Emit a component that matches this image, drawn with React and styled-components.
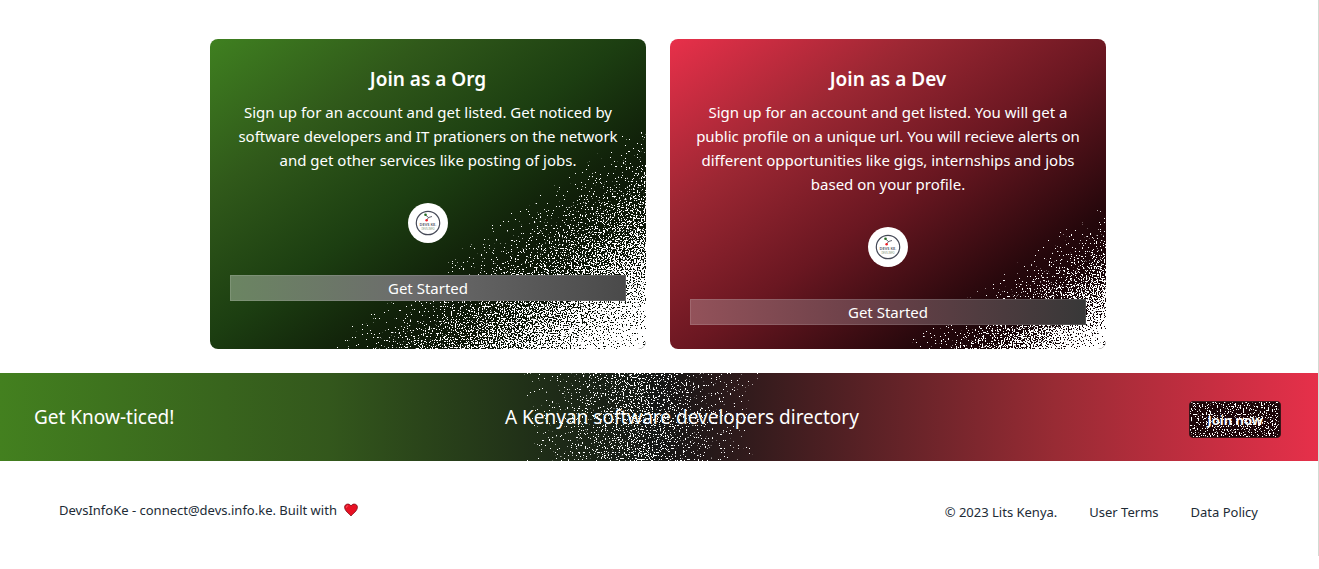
import React from "react";
import styled, { createGlobalStyle } from "styled-components";

const GlobalStyle = createGlobalStyle`
  *, *::before, *::after { box-sizing: border-box; }
  body {
    margin: 0;
    background: #fff;
    color: #212b36;
    font-family: "Segoe UI", "Noto Sans", "Open Sans", sans-serif;
    font-size: 15px;
    line-height: 24px;
  }
`;

const Page = styled.div`
  border-right: 1px solid #d3dad3;
`;

const Cards = styled.main`
  display: grid;
  grid-template-columns: repeat(2, minmax(0, 1fr));
  gap: 24px;
  max-width: 898px;
  margin: 0 auto;
  padding: 39px 2px 24px 0;
`;

const Card = styled.section`
  position: relative;
  isolation: isolate;
  overflow: hidden;
  display: flex;
  flex-direction: column;
  align-items: center;
  padding: 24px 20px;
  border-radius: 8px;
  color: #fff;
  text-align: center;
  background: ${(p) => p.$background};
`;

const CardTitle = styled.h2`
  margin: 0 0 5px;
  font-size: 19px;
  font-weight: 600;
  line-height: 32px;
`;

const CardText = styled.p`
  margin: 0 0 31px;
`;

const Avatar = styled.span`
  display: block;
  width: 40px;
  height: 40px;
  margin-bottom: 32px;
  border-radius: 50%;
  background: #fff;
`;

const StartButton = styled.button`
  width: 100%;
  height: 26px;
  padding: 0;
  border: 1px solid rgba(255, 255, 255, 0.12);
  background: ${(p) => p.$background};
  background-origin: border-box;
  color: #fff;
  font: inherit;
  cursor: pointer;
`;

const Overlay = styled.svg`
  position: absolute;
  inset: 0;
  z-index: -1;
  width: 100%;
  height: 100%;
  pointer-events: none;
`;

const Banner = styled.section`
  position: relative;
  isolation: isolate;
  display: flex;
  justify-content: space-between;
  align-items: flex-start;
  padding: 28px 37px 23px 34px;
  color: #fff;
  background: linear-gradient(to right, #43801f, #33571c 25%, #141615 50%, #982b34 80%, #e6304a);
`;

const BannerText = styled.p`
  margin: 0;
  font-size: 19px;
  line-height: 32px;
`;

const JoinButton = styled.button`
  position: relative;
  isolation: isolate;
  overflow: hidden;
  height: 37px;
  padding: 0 17px;
  border: 1px solid #3a1418;
  border-radius: 4px;
  background: #1c0508;
  color: #fff;
  font-family: inherit;
  font-size: 13px;
  font-weight: 700;
  cursor: pointer;
`;

const Footer = styled.footer`
  display: flex;
  justify-content: space-between;
  align-items: flex-start;
  padding: 39px 60px 32px 59px;
  font-size: 13px;
`;

const Credit = styled.p`
  display: flex;
  align-items: center;
  gap: 7px;
  margin: 0;
  line-height: 20px;
`;

const FooterNav = styled.nav`
  display: flex;
  gap: 32px;
`;

const FooterLink = styled.a`
  color: inherit;
  text-decoration: none;
`;

function Speckle({ id, x2 = 1, y2 = 1, stops }) {
  return (
    <Overlay aria-hidden="true">
      <defs>
        <linearGradient id={`${id}-fade`} x1="0" y1="0" x2={x2} y2={y2}>
          {stops.map(([offset, opacity]) => (
            <stop key={offset} offset={offset} stopColor="#fff" stopOpacity={opacity} />
          ))}
        </linearGradient>
        <filter id={`${id}-grain`} x="0" y="0" width="1" height="1">
          <feTurbulence type="fractalNoise" baseFrequency="0.73" numOctaves="2" seed="4" result="noise" />
          <feComposite in="SourceGraphic" in2="noise" operator="arithmetic" k1="0" k2="1" k3="1" k4="-1" />
          <feComponentTransfer result="dots">
            <feFuncA type="linear" slope="40" intercept="0" />
          </feComponentTransfer>
          <feFlood floodColor="#fff" />
          <feComposite in2="dots" operator="in" />
        </filter>
      </defs>
      <rect width="100%" height="100%" fill={`url(#${id}-fade)`} filter={`url(#${id}-grain)`} />
    </Overlay>
  );
}

function Logo() {
  return (
    <Avatar>
      <svg width="40" height="40" viewBox="0 0 40 40" role="img" aria-label="Devs KE">
        <circle cx="20" cy="20" r="11.7" fill="none" stroke="#454957" strokeWidth="1.2" />
        <path d="M17.5 12 L20.5 14.5 L24 13.5 M20.5 14.5 L18.6 17.2" fill="none" stroke="#3d4050" strokeWidth="0.8" />
        <circle cx="17.5" cy="11.8" r="1.3" fill="#246b21" />
        <circle cx="18.6" cy="17.2" r="1.2" fill="#ee1c25" />
        <text x="20" y="23.4" textAnchor="middle" fontSize="4" fontWeight="600" fill="#565968">DEVS KE.</text>
        <text x="20" y="27.2" textAnchor="middle" fontSize="2.6" fill="#7c9076">DEVS.INFO</text>
      </svg>
    </Avatar>
  );
}

function Heart() {
  return (
    <svg width="14" height="14" viewBox="0 0 14 14" role="img" aria-label="love">
      <path
        d="M7 13 C5.2 10.8 .6 7.8 .6 4.2 C.6 .7 5.4 -.1 7 3 C8.6 -.1 13.4 .7 13.4 4.2 C13.4 7.8 8.8 10.8 7 13Z"
        fill="#e81123"
        stroke="#7d0c18"
        strokeWidth="0.8"
      />
      <path d="M2.4 4.6 C2.4 3.4 3.2 2.8 4.2 2.8" fill="none" stroke="#ff6670" strokeWidth="1" />
    </svg>
  );
}

export default function App() {
  return (
    <>
      <GlobalStyle />
      <Page>
        <Cards>
          <Card $background="linear-gradient(to bottom right, #3f8020, #30591a 25%, #1c3e11 48%, #0e1a08 70%, #060a05)">
            <Speckle id="org" stops={[[0, 0], [0.61, 0], [0.63, 0.25], [0.8, 0.48], [1, 0.74]]} />
            <CardTitle>Join as a Org</CardTitle>
            <CardText>
              Sign up for an account and get listed. Get noticed by software developers and IT
              prationers on the network and get other services like posting of jobs.
            </CardText>
            <Logo />
            <StartButton type="button" $background="linear-gradient(to right, #6b8562, #6c6c6c 45%, #4a4a4a)">
              Get Started
            </StartButton>
          </Card>
          <Card $background="linear-gradient(to bottom right, #e8304a, #9c2733 28%, #6a1721 52%, #24070b 78%, #080203)">
            <Speckle id="dev" stops={[[0, 0], [0.74, 0], [0.76, 0.25], [0.88, 0.48], [1, 0.74]]} />
            <CardTitle>Join as a Dev</CardTitle>
            <CardText>
              Sign up for an account and get listed. You will get a public profile on a unique url.
              You will recieve alerts on different opportunities like gigs, internships and jobs
              based on your profile.
            </CardText>
            <Logo />
            <StartButton type="button" $background="linear-gradient(to right, #93525a, #6a4048 45%, #383838)">
              Get Started
            </StartButton>
          </Card>
        </Cards>
        <Banner>
          <Speckle id="banner" y2={0} stops={[[0, 0], [0.38, 0], [0.4, 0.26], [0.485, 0.42], [0.57, 0.26], [0.59, 0]]} />
          <BannerText>Get Know-ticed!</BannerText>
          <BannerText>A Kenyan software developers directory</BannerText>
          <JoinButton type="button">
            <Speckle id="join" stops={[[0, 0.4], [1, 0.4]]} />
            Join now
          </JoinButton>
        </Banner>
        <Footer>
          <Credit>
            DevsInfoKe - connect@devs.info.ke. Built with <Heart />
          </Credit>
          <FooterNav>
            <span>© 2023 Lits Kenya.</span>
            <FooterLink href="#terms">User Terms</FooterLink>
            <FooterLink href="#policy">Data Policy</FooterLink>
          </FooterNav>
        </Footer>
      </Page>
    </>
  );
}
